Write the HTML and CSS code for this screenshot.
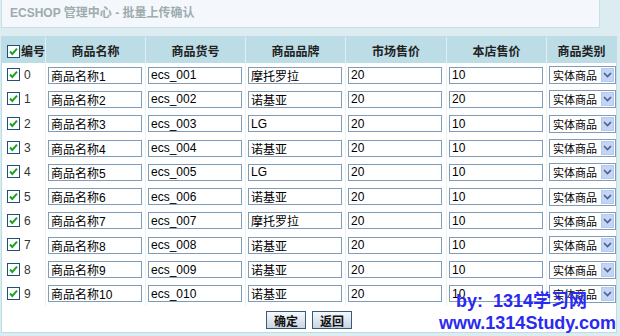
FILE: index.html
```html
<!DOCTYPE html>
<html lang="zh-CN">
  <head>
    <meta charset="UTF-8" />
    <title>ECSHOP 管理中心 - 批量上传确认</title>
    <link rel="stylesheet" href="styles.css">
  </head>
  <body>
    <h1 class="title">ECSHOP 管理中心 - 批量上传确认</h1>

    <div class="list-div">
      <table class="goods-table">
        <tr>
          <th class="col-id"><span class="check"><svg width="13" height="13" viewBox="0 0 13 13"><rect x="0.5" y="0.5" width="12" height="12" fill="#fff" stroke="#1c5180"/><path d="M3 6.5L5.3 9L10 3.6" fill="none" stroke="#21a121" stroke-width="2"/></svg></span>编号</th>
          <th class="col-name">商品名称</th>
          <th class="col-sn">商品货号</th>
          <th class="col-brand">商品品牌</th>
          <th class="col-market">市场售价</th>
          <th class="col-shop">本店售价</th>
          <th>商品类别</th>
        </tr>
      </table>
    </div>

    <div class="watermark">
      <div class="wm-by">by:&nbsp;&nbsp;1314学习网</div>
      <div>www.1314Study.com</div>
    </div>

    <script src="rows.js"></script>
  </body>
</html>
```

FILE: rows.js
```js
// goods list for the confirm table
var goods = [
  ["商品名称1", "ecs_001", "摩托罗拉", "20", "10"],
  ["商品名称2", "ecs_002", "诺基亚", "20", "20"],
  ["商品名称3", "ecs_003", "LG", "20", "10"],
  ["商品名称4", "ecs_004", "诺基亚", "20", "10"],
  ["商品名称5", "ecs_005", "LG", "20", "10"],
  ["商品名称6", "ecs_006", "诺基亚", "20", "10"],
  ["商品名称7", "ecs_007", "摩托罗拉", "20", "10"],
  ["商品名称8", "ecs_008", "诺基亚", "20", "10"],
  ["商品名称9", "ecs_009", "诺基亚", "20", "10"],
  ["商品名称10", "ecs_010", "诺基亚", "20", "10"]
];

var checkSvg =
  '<span class="check"><svg width="13" height="13" viewBox="0 0 13 13">' +
  '<rect x="0.5" y="0.5" width="12" height="12" fill="#fff" stroke="#1c5180"/>' +
  '<path d="M3 6.5L5.3 9L10 3.6" fill="none" stroke="#21a121" stroke-width="2"/></svg></span>';

var selectHtml =
  '<div class="select"><span class="sel-text">实体商品</span>' +
  '<span class="sel-btn"><svg width="9" height="6" viewBox="0 0 9 6">' +
  '<path d="M1 1L4.5 4.5L8 1" fill="none" stroke="#4d6185" stroke-width="1.6"/></svg></span></div>';

var table = document.querySelector(".goods-table");

goods.forEach(function (g, i) {
  var tr = document.createElement("tr");
  var html = '<td class="id-cell">' + checkSvg + i + "</td>";
  g.forEach(function (v) {
    html += '<td><input type="text" class="text" value="' + v + '" /></td>';
  });
  html += "<td>" + selectHtml + "</td>";
  tr.innerHTML = html;
  table.appendChild(tr);
});

var foot = document.createElement("div");
foot.className = "actions";
foot.innerHTML =
  '<button type="button" class="button">确定</button>' +
  '<button type="button" class="button">返回</button>';
document.querySelector(".list-div").appendChild(foot);
```

FILE: styles.css
```css
body {
  margin: 0;
  height: 336px;
  overflow: hidden;
  position: relative;
  background: #dcecf1;
  font: 12px "Liberation Sans", "Noto Sans CJK SC", sans-serif;
  color: #222;
}
.title {
  margin: 0 20px 0 1px;
  height: 27px;
  line-height: 27px;
  padding-left: 8px;
  background: #f4f7fb;
  border: 1px solid #c6e0e8;
  border-top: 0;
  font-size: 12px;
  font-weight: bold;
  color: #9cacaf;
}
.list-div {
  margin: 8px 3px 0 1px;
  background: #fff;
  border: 1px solid #bbdde5;
}
.goods-table {
  width: 100%;
  table-layout: fixed;
  border-collapse: separate;
  border-spacing: 0;
}
.goods-table th {
  box-sizing: border-box;
  height: 26px;
  padding: 0;
  background: #bcdde6;
  border-left: 1px solid #def0f4;
  font-weight: bold;
  color: #222;
  text-align: center;
}
.goods-table td {
  height: 24.3px;
  padding: 0 2px;
  border-left: 1px solid #e8f1f4;
  vertical-align: middle;
}
.goods-table th:first-child,
.goods-table td:first-child {
  border-left: 0;
}
.col-id {
  width: 43px;
  text-align: left !important;
  padding-left: 5px !important;
}
.col-name,
.col-sn,
.col-brand,
.col-shop {
  width: 100px;
}
.col-market {
  width: 101px;
}
.check {
  display: inline-block;
  width: 13px;
  height: 13px;
  vertical-align: -2px;
  margin-right: 1px;
}
.check svg {
  display: block;
}
.goods-table .id-cell {
  padding-left: 5px;
  color: #333;
}
.id-cell .check {
  margin-right: 4px;
}
.text {
  box-sizing: border-box;
  display: block;
  width: 94px;
  height: 17px;
  margin: 0;
  padding: 0 2px;
  border: 1px solid #7f9db9;
  font: 12px "Liberation Sans", "Noto Sans CJK SC", sans-serif;
  color: #000;
  background: #fff;
}
.select {
  box-sizing: border-box;
  display: flex;
  align-items: center;
  width: 67px;
  height: 18px;
  border: 1px solid #7f9db9;
  background: #fff;
  padding: 0 1px 0 3px;
}
.sel-text {
  flex: 1;
  font-size: 11px;
  color: #000;
  white-space: nowrap;
}
.sel-btn {
  display: flex;
  align-items: center;
  justify-content: center;
  width: 13px;
  height: 14px;
  background: #c3d4f6;
  border: 1px solid #b5c9ef;
  box-sizing: border-box;
}
.actions {
  padding: 5px 0 3px;
  text-align: center;
  font-size: 0;
}
.button {
  width: 40px;
  height: 18px;
  margin: 0 3px;
  padding: 0;
  border: 1px solid #3b5a7a;
  background: linear-gradient(#f6f8fb, #c8d5e3);
  font: bold 12px "Liberation Sans", "Noto Sans CJK SC", sans-serif;
  color: #111;
}
.watermark {
  position: absolute;
  left: 439px;
  top: 290px;
  font: bold 18px/22px "Liberation Sans", "Noto Sans CJK SC", sans-serif;
  color: #2a2af0;
  white-space: nowrap;
}
.wm-by {
  padding-left: 17px;
}
```
